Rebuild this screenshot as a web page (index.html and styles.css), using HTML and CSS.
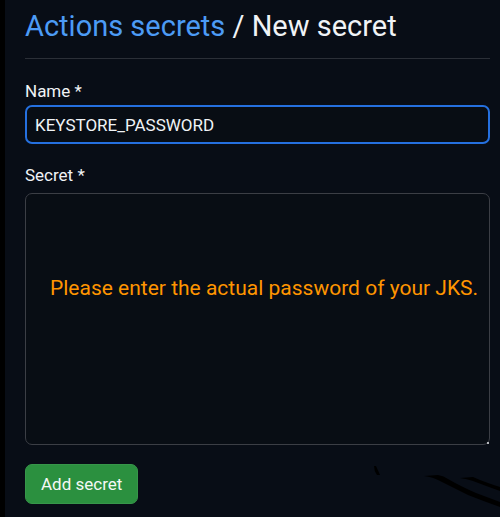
FILE: index.html
```html
<!DOCTYPE html>
<html lang="en">
<head>
<meta charset="utf-8">
<meta name="viewport" content="width=device-width, initial-scale=1">
<title>New secret</title>
<link rel="stylesheet" href="styles.css">
</head>
<body>
<main class="page">
  <h1 class="title"><a class="crumb" href="#">Actions secrets</a> / New secret</h1>
  <form class="form">
    <div class="field">
      <label class="label" for="name">Name *</label>
      <input class="input" id="name" type="text" value="KEYSTORE_PASSWORD" spellcheck="false">
    </div>
    <div class="field field-tall">
      <label class="label" for="secret">Secret *</label>
      <div class="secret-box">
        <textarea class="textarea" id="secret" spellcheck="false">Please enter the actual password of your JKS.</textarea>
        <span class="grip"></span>
      </div>
    </div>
    <button class="submit" type="button">Add secret</button>
  </form>
  <svg class="strokes" width="128" height="52" viewBox="0 0 128 52" aria-hidden="true">
    <path d="M2 1 L4 1 L8 10 L5 10 Q2 6 2 1Z"/>
    <path d="M52 11 L66 10 Q72 11 76 14 Q88 21 104 28 L128 37 V42 Q111 36 96 30 L68 16 Q61 12 52 11Z"/>
    <path d="M88 13 L101 12 Q112 17 128 22 V26 Q114 21 101 16 Q95 14 88 13Z"/>
  </svg>
</main>
</body>
</html>
```
FILE: styles.css
```css
* {
  box-sizing: border-box;
}

body {
  margin: 0;
  background: #080d16;
  color: #f0f3f6;
  font-family: Roboto, "Liberation Sans", sans-serif;
}

.page {
  position: relative;
  min-height: 100vh;
  padding: 8px 10px 12px 20px;
  border-left: 5px solid #000;
}

.title {
  margin: 0 0 24px;
  padding-bottom: 14px;
  border-bottom: 1px solid #2b2f37;
  font-size: 29px;
  line-height: 36px;
  font-weight: 400;
}

.crumb {
  color: #4c9bf5;
  text-decoration: none;
}

.form {
  display: flex;
  flex-direction: column;
  align-items: flex-start;
  gap: 19px;
}

.field {
  display: flex;
  flex-direction: column;
  gap: 6px;
  width: 100%;
}

.field-tall {
  gap: 10px;
  padding-top: 4px;
}

.label {
  font-size: 17px;
  line-height: 16px;
}

.input {
  width: 100%;
  height: 39px;
  padding: 0 8px;
  border: 2px solid #2570df;
  border-radius: 7px;
  outline: none;
  background: #080d14;
  color: inherit;
  font: 17px/24px Roboto, "Liberation Sans", sans-serif;
}

.secret-box {
  position: relative;
  display: flex;
}

.textarea {
  width: 100%;
  height: 252px;
  padding: 82px 0 0 24px;
  border: 1px solid #3b3e45;
  border-radius: 7px;
  outline: none;
  resize: none;
  overflow: hidden;
  background: #080d14;
  color: #ff9500;
  font: 21px/24px Roboto, "Liberation Sans", sans-serif;
}

.grip {
  position: absolute;
  right: 1px;
  bottom: 1px;
  width: 2px;
  height: 2px;
  background: #b4b7bb;
}

.submit {
  height: 40px;
  padding: 0 15px;
  border: 1px solid #37964a;
  border-radius: 7px;
  background: #2b903f;
  color: #f4f8f5;
  font: 17px/24px Roboto, "Liberation Sans", sans-serif;
}

.strokes {
  position: absolute;
  right: 0;
  bottom: 0;
  fill: #000;
}
```
